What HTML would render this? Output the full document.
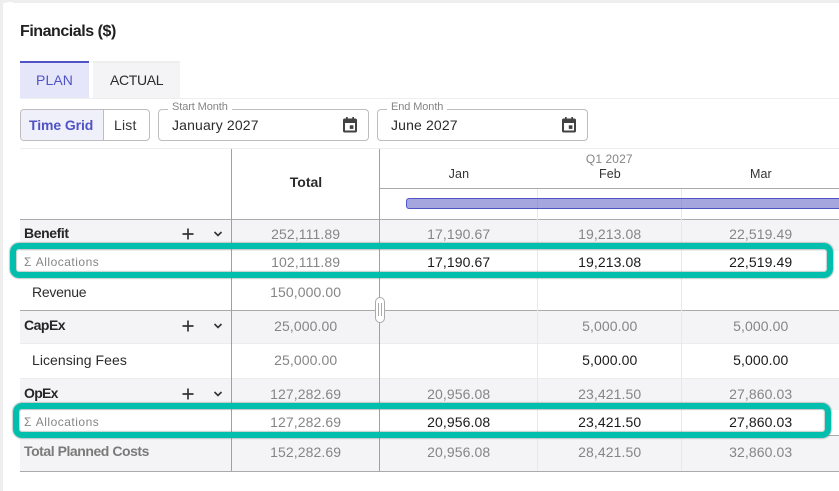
<!DOCTYPE html>
<html><head><meta charset="utf-8">
<style>
html,body{margin:0;padding:0;width:839px;height:491px;overflow:hidden;background:#fff}
body{position:relative;font-family:"Liberation Sans",sans-serif;color:#212121}
.a{position:absolute}
.t{position:absolute;white-space:nowrap;font-size:14px;line-height:16px}
.c{transform:translateX(-50.500%);letter-spacing:.1px}
.g{color:#858585}
.k{color:#1a1a1a}
.b{font-weight:bold}
.row{position:absolute;left:20px;width:819px}
.v{position:absolute;width:1px}
</style></head><body>
<!-- card edge -->
<div class="a" style="left:0;top:0;width:839px;height:3px;background:#eeeeee"></div>
<div class="a" style="left:0;top:0;width:3px;height:491px;background:#eeeeee"></div>
<div class="a" style="left:3px;top:2px;width:10px;height:10px;background:#fff;border-top-left-radius:6px"></div>

<div class="t b" style="left:20px;top:23px;font-size:16px;line-height:18px;color:#212121;letter-spacing:-.46px">Financials ($)</div>

<!-- tabs -->
<div class="a" style="left:20px;top:61px;width:69px;height:35px;background:#e6e6fa;border-top:2px solid #5053c6"></div>
<div class="t" style="left:36px;top:72px;font-size:14px;color:#5053c6;letter-spacing:.1px">PLAN</div>
<div class="a" style="left:93px;top:61px;width:87px;height:35px;background:#f4f4f6;border-top:2px solid #eeeeee"></div>
<div class="t" style="left:110px;top:72px;font-size:14px;color:#2b2b2b;letter-spacing:-.35px">ACTUAL</div>
<div class="a" style="left:20px;top:98px;width:819px;height:1px;background:#eeeeee"></div>

<!-- toggle -->
<div class="a" style="left:20px;top:109px;width:128px;height:30px;border:1px solid #bdbdbd;border-radius:4px;overflow:hidden">
  <div class="a" style="left:0;top:0;width:82px;height:30px;background:#f0f0fb;border-right:1px solid #bdbdbd"></div>
</div>
<div class="t b" style="left:29px;top:117px;font-size:14px;color:#5053c6;letter-spacing:-.1px">Time Grid</div>
<div class="t" style="left:114px;top:117px;font-size:14px;color:#333;letter-spacing:.2px">List</div>

<!-- start month -->
<div class="a" style="left:158px;top:109px;width:209px;height:30px;border:1px solid #bdbdbd;border-radius:4px"></div>
<div class="t" style="left:168px;top:100px;font-size:11px;line-height:14px;color:#858585;background:#fff;padding:0 4px;letter-spacing:-.1px">Start Month</div>
<div class="t" style="left:172px;top:117px;font-size:14px;color:#2b2b2b;letter-spacing:.15px">January 2027</div>
<svg class="a" style="left:341px;top:116px" width="18" height="18" viewBox="0 0 18 18"><path fill="#424242" fill-rule="evenodd" d="M3.500 2.500H5V1h1.700v1.500h4.600V1H13v1.500h1.500c.8 0 1.500.7 1.500 1.500v11c0 .8-.7 1.500-1.500 1.500h-11C2.700 16.500 2 15.800 2 15V4c0-.8.7-1.500 1.500-1.500zM4 7V14.500h10V7z"/><rect x="8.800" y="9.300" width="3.600" height="3.600" fill="#424242"/></svg>

<!-- end month -->
<div class="a" style="left:377px;top:109px;width:209px;height:30px;border:1px solid #bdbdbd;border-radius:4px"></div>
<div class="t" style="left:387px;top:100px;font-size:11px;line-height:14px;color:#858585;background:#fff;padding:0 4px;letter-spacing:-.1px">End Month</div>
<div class="t" style="left:391px;top:117px;font-size:14px;color:#2b2b2b;letter-spacing:.15px">June 2027</div>
<svg class="a" style="left:560px;top:116px" width="18" height="18" viewBox="0 0 18 18"><path fill="#424242" fill-rule="evenodd" d="M3.500 2.500H5V1h1.700v1.500h4.600V1H13v1.500h1.500c.8 0 1.500.7 1.500 1.500v11c0 .8-.7 1.500-1.500 1.500h-11C2.700 16.500 2 15.800 2 15V4c0-.8.7-1.500 1.500-1.500zM4 7V14.500h10V7z"/><rect x="8.800" y="9.300" width="3.600" height="3.600" fill="#424242"/></svg>

<!-- grid lines -->
<div class="a" style="left:20px;top:148px;width:819px;height:1px;background:#eeeeee"></div>

<!-- row backgrounds -->
<div class="row" style="top:220px;height:31px;background:#f4f4f6"></div>
<div class="row" style="top:311px;height:32px;background:#f4f4f6;border-bottom:1px solid #ececec"></div>
<div class="row" style="top:378px;height:31px;background:#f4f4f6;border-top:1px solid #ececec"></div>
<div class="row" style="top:436px;height:35px;background:#f4f4f6"></div>

<div class="a" style="left:380px;top:188px;width:459px;height:1px;background:#aaaaaa"></div>
<div class="row" style="top:219px;height:1px;background:#aaaaaa"></div>
<div class="row" style="top:310px;height:1px;background:#aaaaaa"></div>
<div class="row" style="top:471px;height:1px;background:#aaaaaa"></div>
<div class="row" style="top:435px;height:1px;background:#aaaaaa"></div>

<div class="v" style="left:537px;top:189px;height:282px;background:#e8e8e8"></div>
<div class="v" style="left:681px;top:189px;height:282px;background:#e8e8e8"></div>
<div class="v" style="left:231px;top:149px;height:322px;background:#a0a0a0"></div>
<div class="v" style="left:379px;top:149px;height:322px;background:#a0a0a0"></div>

<!-- header -->
<div class="t b" style="left:306px;top:174px;transform:translateX(-50%);color:#2b2b2b;font-size:14px">Total</div>
<div class="t c g" style="left:609.500px;top:152px;font-size:12px;line-height:14px">Q1 2027</div>
<div class="t c" style="left:459px;top:167px;font-size:12.500px;line-height:14px;color:#333">Jan</div>
<div class="t c" style="left:610px;top:167px;font-size:12.500px;line-height:14px;color:#333">Feb</div>
<div class="t c" style="left:761px;top:167px;font-size:12.500px;line-height:14px;color:#333">Mar</div>

<!-- gantt bar -->
<div class="a" style="left:406px;top:198px;width:440px;height:9px;background:#a6a6df;border:1px solid #5053c6;border-radius:3px"></div>
<div class="v" style="left:537px;top:199px;height:9px;background:#9c9cd6"></div>
<div class="v" style="left:681px;top:199px;height:9px;background:#9c9cd6"></div>

<!-- left labels -->
<div class="t b" style="left:24px;top:225px;color:#262626;letter-spacing:-.4px">Benefit</div>
<div class="t g" style="left:24px;top:254px;font-size:12px;line-height:16px;letter-spacing:.5px">Σ Allocations</div>
<div class="t" style="left:32px;top:284px;color:#2b2b2b;letter-spacing:-.25px">Revenue</div>
<div class="t b" style="left:24px;top:317px;color:#262626;letter-spacing:-.5px">CapEx</div>
<div class="t" style="left:32px;top:352px;color:#2b2b2b;letter-spacing:.05px">Licensing Fees</div>
<div class="t b" style="left:24px;top:385px;color:#262626;letter-spacing:-.7px">OpEx</div>
<div class="t g" style="left:24px;top:414px;font-size:12px;line-height:16px;letter-spacing:.5px">Σ Allocations</div>
<div class="t b" style="left:24px;top:443px;color:#7a7a7a;letter-spacing:-.45px">Total Planned Costs</div>

<!-- row icons -->
<svg class="a" style="left:180px;top:226px" width="48" height="16" viewBox="0 0 48 16"><path d="M8 2.500v11M2.500 8h11" stroke="#333" stroke-width="1.700" fill="none"/><path d="M34.500 6l3.500 3.500L41.500 6" stroke="#333" stroke-width="1.600" fill="none"/></svg>
<svg class="a" style="left:180px;top:318px" width="48" height="16" viewBox="0 0 48 16"><path d="M8 2.500v11M2.500 8h11" stroke="#333" stroke-width="1.700" fill="none"/><path d="M34.500 6l3.500 3.500L41.500 6" stroke="#333" stroke-width="1.600" fill="none"/></svg>
<svg class="a" style="left:180px;top:386px" width="48" height="16" viewBox="0 0 48 16"><path d="M8 2.500v11M2.500 8h11" stroke="#333" stroke-width="1.700" fill="none"/><path d="M34.500 6l3.500 3.500L41.500 6" stroke="#333" stroke-width="1.600" fill="none"/></svg>

<!-- total col -->
<div class="t c g" style="left:306px;top:226px">252,111.89</div>
<div class="t c g" style="left:306px;top:254px">102,111.89</div>
<div class="t c g" style="left:306px;top:284px">150,000.00</div>
<div class="t c g" style="left:306px;top:318px">25,000.00</div>
<div class="t c g" style="left:306px;top:352px">25,000.00</div>
<div class="t c g" style="left:306px;top:386px">127,282.69</div>
<div class="t c g" style="left:306px;top:414px">127,282.69</div>
<div class="t c g" style="left:306px;top:444px">152,282.69</div>

<!-- Jan -->
<div class="t c g" style="left:459px;top:226px">17,190.67</div>
<div class="t c k" style="left:459px;top:254px">17,190.67</div>
<div class="t c g" style="left:459px;top:386px">20,956.08</div>
<div class="t c k" style="left:459px;top:414px">20,956.08</div>
<div class="t c g" style="left:459px;top:444px">20,956.08</div>
<!-- Feb -->
<div class="t c g" style="left:610px;top:226px">19,213.08</div>
<div class="t c k" style="left:610px;top:254px">19,213.08</div>
<div class="t c g" style="left:610px;top:318px">5,000.00</div>
<div class="t c k" style="left:610px;top:352px">5,000.00</div>
<div class="t c g" style="left:610px;top:386px">23,421.50</div>
<div class="t c k" style="left:610px;top:414px">23,421.50</div>
<div class="t c g" style="left:610px;top:444px">28,421.50</div>
<!-- Mar -->
<div class="t c g" style="left:761px;top:226px">22,519.49</div>
<div class="t c k" style="left:761px;top:254px">22,519.49</div>
<div class="t c g" style="left:761px;top:318px">5,000.00</div>
<div class="t c k" style="left:761px;top:352px">5,000.00</div>
<div class="t c g" style="left:761px;top:386px">27,860.03</div>
<div class="t c k" style="left:761px;top:414px">27,860.03</div>
<div class="t c g" style="left:761px;top:444px">32,860.03</div>

<!-- splitter handle -->
<div class="a" style="left:375px;top:297px;width:8px;height:24px;background:#fff;border:1px solid #aaaaaa;border-radius:5px"></div>
<div class="a" style="left:378px;top:303px;width:1px;height:13px;background:#aaaaaa"></div>
<div class="a" style="left:381px;top:303px;width:1px;height:13px;background:#aaaaaa"></div>

<!-- teal highlights -->
<div class="a" style="left:10px;top:243px;width:811px;height:23px;border:6px solid #02bfad;border-radius:9px;box-shadow:0 0 1px 1px rgba(90,110,110,.35),inset 0 0 1px 1px rgba(90,110,110,.35)"></div>
<div class="a" style="left:13px;top:403px;width:806px;height:23px;border:6px solid #02bfad;border-radius:9px;box-shadow:0 0 1px 1px rgba(90,110,110,.35),inset 0 0 1px 1px rgba(90,110,110,.35)"></div>
</body></html>
